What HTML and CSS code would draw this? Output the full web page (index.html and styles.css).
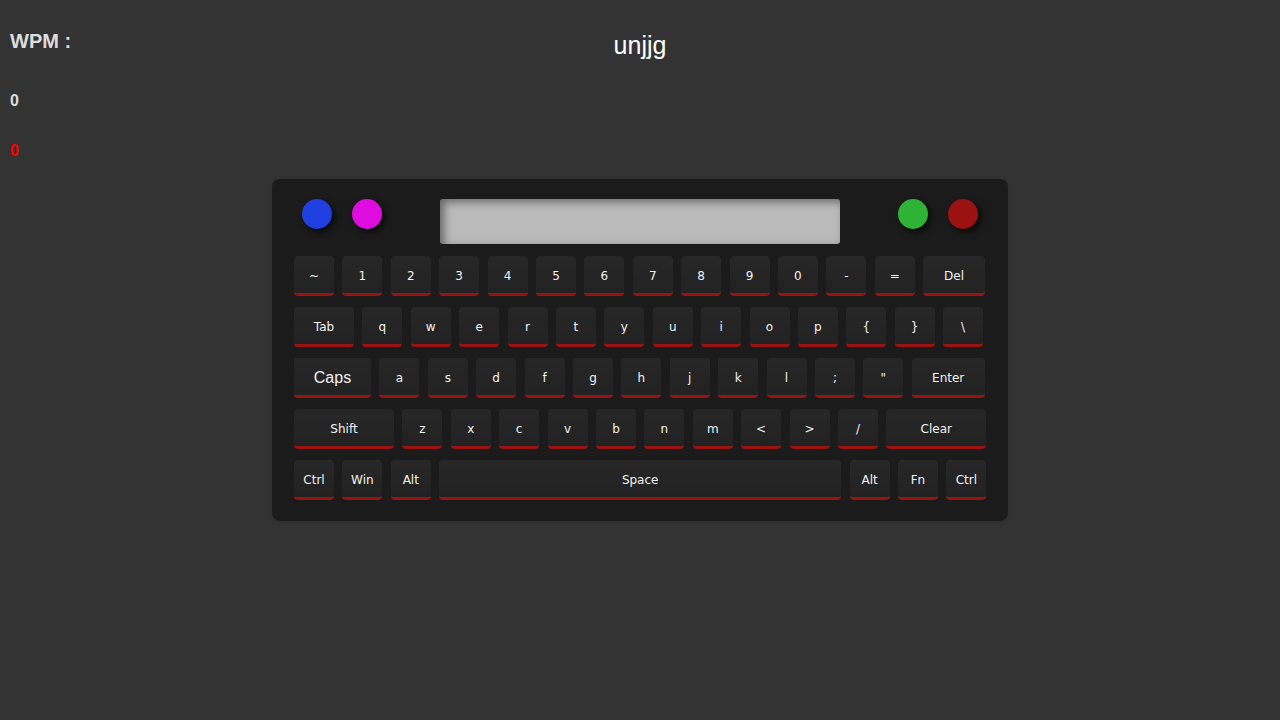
FILE: index.html
```html
<!DOCTYPE html>
<html>
<head>
<meta charset="utf-8">
<link rel="stylesheet" href="styles.css">
</head>
<body>
<div class="top">
  <div class="stats">
    <div class="wpm-label">WPM :</div>
    <div class="wpm-value">0</div>
    <div class="err-value">0</div>
  </div>
  <div class="title">unjjg</div>
  <div></div>
</div>
<div class="keyboard">
  <div class="bar">
    <div class="lights left">
      <span class="dot blue"></span>
      <span class="dot magenta"></span>
    </div>
    <div class="screen"></div>
    <div class="lights right">
      <span class="dot green"></span>
      <span class="dot red"></span>
    </div>
  </div>
  <div class="row">
    <div class="key">~</div><div class="key">1</div><div class="key">2</div><div class="key">3</div><div class="key">4</div><div class="key">5</div><div class="key">6</div><div class="key">7</div><div class="key">8</div><div class="key">9</div><div class="key">0</div><div class="key">-</div><div class="key">=</div><div class="key w-del">Del</div>
  </div>
  <div class="row">
    <div class="key w-tab">Tab</div><div class="key">q</div><div class="key">w</div><div class="key">e</div><div class="key">r</div><div class="key">t</div><div class="key">y</div><div class="key">u</div><div class="key">i</div><div class="key">o</div><div class="key">p</div><div class="key">{</div><div class="key">}</div><div class="key">\</div>
  </div>
  <div class="row">
    <div class="key w-caps caps">Caps</div><div class="key">a</div><div class="key">s</div><div class="key">d</div><div class="key">f</div><div class="key">g</div><div class="key">h</div><div class="key">j</div><div class="key">k</div><div class="key">l</div><div class="key">;</div><div class="key">"</div><div class="key w-enter">Enter</div>
  </div>
  <div class="row">
    <div class="key w-shift">Shift</div><div class="key">z</div><div class="key">x</div><div class="key">c</div><div class="key">v</div><div class="key">b</div><div class="key">n</div><div class="key">m</div><div class="key">&lt;</div><div class="key">&gt;</div><div class="key">/</div><div class="key w-clear">Clear</div>
  </div>
  <div class="row">
    <div class="key">Ctrl</div><div class="key">Win</div><div class="key">Alt</div><div class="key w-space">Space</div><div class="key">Alt</div><div class="key">Fn</div><div class="key">Ctrl</div>
  </div>
</div>
</body>
</html>
```
FILE: styles.css
```css
html, body {
  margin: 0;
  padding: 0;
  background: #333333;
  height: 100%;
}
body {
  font-family: "Liberation Sans", Arial, sans-serif;
}
.top {
  display: grid;
  grid-template-columns: 1fr auto 1fr;
}
.stats {
  padding-left: 10px;
}
.wpm-label {
  margin-top: 30px;
  font-size: 20px;
  line-height: 23px;
  font-weight: bold;
  color: #dddddd;
}
.wpm-value {
  margin-top: 39px;
  font-size: 16px;
  line-height: 18px;
  font-weight: bold;
  color: #dddddd;
}
.err-value {
  margin-top: 32px;
  font-size: 16px;
  line-height: 18px;
  font-weight: bold;
  color: #ff0000;
}
.title {
  margin-top: 31px;
  font-size: 25px;
  line-height: 29px;
  color: #ffffff;
}
.keyboard {
  width: 736px;
  box-sizing: border-box;
  margin: 19px auto 0;
  padding: 20px 22px 21px;
  background: #1b1b1b;
  border-radius: 8px;
  box-shadow: 0 1px 4px rgba(0,0,0,0.15);
}
.bar {
  display: grid;
  grid-template-columns: 1fr 400px 1fr;
  align-items: start;
  margin-bottom: 12px;
}
.lights {
  display: flex;
  gap: 20px;
}
.lights.left {
  padding-left: 8px;
}
.lights.right {
  justify-content: flex-end;
  padding-right: 8px;
}
.dot {
  width: 30px;
  height: 30px;
  border-radius: 50%;
  box-shadow: 3px 3px 6px rgba(0,0,0,0.7);
}
.blue { background: #1f3fe0; }
.magenta { background: #df0cdf; }
.green { background: #2fb336; }
.red { background: #9c1111; }
.screen {
  height: 45px;
  background: #bababa;
  border-radius: 3px;
  box-shadow: inset 4px 3px 8px rgba(0,0,0,0.45);
}
.row {
  display: flex;
  gap: 8.4px;
  margin-bottom: 11px;
}
.row:last-child {
  margin-bottom: 0;
}
.key {
  width: 40px;
  height: 34px;
  padding-top: 3px;
  flex: none;
  box-sizing: content-box;
  background: linear-gradient(#272727, #222222);
  border-bottom: 3px solid #9a1313;
  border-radius: 4px;
  display: flex;
  align-items: center;
  justify-content: center;
  font-family: "DejaVu Sans", Tahoma, Verdana, sans-serif;
  font-size: 12px;
  color: #f2f2f2;
}
.w-del { width: 62px; }
.w-tab { width: 60px; }
.w-caps { width: 77px; }
.w-enter { width: 73px; }
.w-shift { width: 100px; }
.w-clear { width: 100px; }
.w-space { width: 402px; }
.caps {
  font-family: "Liberation Sans", Arial, sans-serif;
  font-size: 16px;
}
```
